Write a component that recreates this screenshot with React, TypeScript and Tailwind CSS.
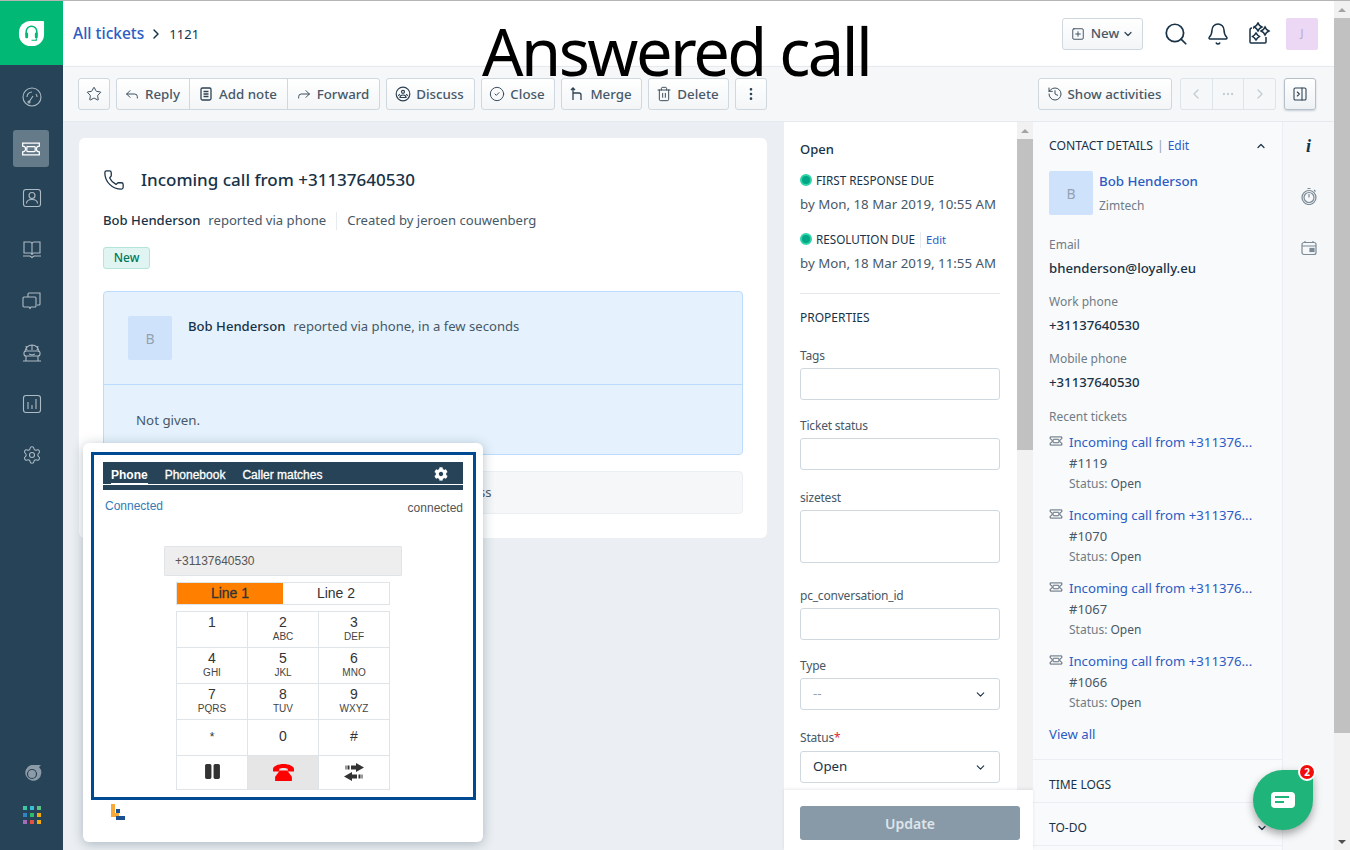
import {
  Bell,
  ChevronDown,
  ChevronLeft,
  ChevronRight,
  ChevronUp,
  CircleCheck,
  Ellipsis,
  EllipsisVertical,
  Forward,
  History,
  PanelRightClose,
  Phone,
  Reply,
  Search,
  Settings,
  SquarePlus,
  Star,
  Trash2,
} from "lucide-react";
import { FaCog, FaPause } from "react-icons/fa";
import type { ReactNode } from "react";

const FONT = "font-['Noto_Sans','Open_Sans',sans-serif]";

const RECENT = ["#1119", "#1070", "#1067", "#1066"];

const KEYS = [
  ["1", ""],
  ["2", "ABC"],
  ["3", "DEF"],
  ["4", "GHI"],
  ["5", "JKL"],
  ["6", "MNO"],
  ["7", "PQRS"],
  ["8", "TUV"],
  ["9", "WXYZ"],
];

const DOTS = ["#3fc7a3", "#3bbcd9", "#5cc185", "#2f84c6", "#2dbb6c", "#f1ab0c", "#a46bb8", "#e5503f", "#f1ab0c"];

function TicketIcon({ className }: { className?: string }) {
  return (
    <svg viewBox="0 0 24 24" fill="none" stroke="currentColor" strokeWidth="1.5" className={className}>
      <path d="M2 5h20v3.5a3.5 3.5 0 0 0 0 7V19H2v-3.5a3.5 3.5 0 0 0 0-7z" />
      <rect x="7" y="9" width="10" height="6" rx="1" />
    </svg>
  );
}

function NavIcon({ children, className = "" }: { children: ReactNode; className?: string }) {
  return (
    <svg viewBox="0 0 20 20" fill="none" stroke="#aebac4" strokeWidth="1.1" className={`h-[20px] w-[20px] ${className}`}>
      {children}
    </svg>
  );
}

function FooterDots() {
  return (
    <div className="grid grid-cols-3 gap-[3px]">
      {DOTS.map((c, i) => (
        <div key={i} className="h-[4px] w-[4px]" style={{ backgroundColor: c }} />
      ))}
    </div>
  );
}

function Sidebar() {
  return (
    <div className="flex w-[63px] shrink-0 flex-col items-center bg-[#274357]">
      <div className="flex h-[64px] w-full items-center justify-center bg-[#02b875]">
        <svg viewBox="0 0 28 28" className="h-[27px] w-[27px]">
          <path d="M13 1h13a1 1 0 0 1 1 1v13a12 12 0 0 1-12 12H13A12 12 0 0 1 1 15v-2A12 12 0 0 1 13 1z" fill="#fff" />
          <path d="M8.500 15v-3a5.500 5.500 0 0 1 11 0v3" fill="none" stroke="#02b875" strokeWidth="1.600" />
          <rect x="7.500" y="13" width="3" height="6" rx="1.400" fill="#02b875" />
          <rect x="17.500" y="13" width="3" height="6" rx="1.400" fill="#02b875" />
          <path d="M19 19v2h-5" fill="none" stroke="#02b875" strokeWidth="1.200" />
        </svg>
      </div>
      <div className="mt-[22px] flex flex-col items-center">
        <NavIcon>
          <circle cx="10" cy="10" r="9" />
          <path d="M5 10a5 5 0 0 1 5-5M15 10a5 5 0 0 0-1-3M11 9l-4 6" />
          <circle cx="7" cy="15" r="1" />
        </NavIcon>
        <div className="mt-[23px] mr-[1px] flex h-[37px] w-[36px] items-center justify-center rounded-[3px] bg-[#657b8a]">
          <TicketIcon className="h-[20px] w-[20px] text-white" />
        </div>
        <NavIcon className="mt-[21px]">
          <rect x="1.500" y="1.500" width="17" height="17" rx="2.500" />
          <circle cx="10" cy="7.500" r="3" />
          <path d="M4.500 15.500c0-3 2.500-4 5.500-4s5.500 1 5.500 4" />
        </NavIcon>
        <NavIcon className="mt-[32px]">
          <path d="M2 2h6c1 0 2 .5 2 2v11c0-1-1-2-2-2H2zM18 2h-6c-1 0-2 .5-2 2v11c0-1 1-2 2-2h6zM1 16h7l2 1.500 2-1.500h7" />
        </NavIcon>
        <NavIcon className="mt-[31px]">
          <path d="M6 6V3a1 1 0 0 1 1-1h11v11a1 1 0 0 1-1 1h-2" />
          <path d="M2 6h11a1 1 0 0 1 1 1v8a1 1 0 0 1-1 1H9l-1 1.500L7 16H2a1 1 0 0 1-1-1V7a1 1 0 0 1 1-1z" />
        </NavIcon>
        <NavIcon className="mt-[32px]">
          <path d="M3 9a7 7 0 0 1 14 0M10 2v5M4 3l1 4M16 3l-1 4" />
          <rect x="2" y="8" width="16" height="5" rx="2" />
          <path d="M4 13v5M16 13v5M1 18h18M7 11l3 1 3-1" />
        </NavIcon>
        <NavIcon className="mt-[31px]">
          <rect x="1.500" y="1.500" width="17" height="17" rx="2.500" />
          <path d="M6 8v7M10 11v4M14 5v10" />
        </NavIcon>
        <Settings className="mt-[31px] h-[20px] w-[20px] text-[#aebac4]" strokeWidth={1.3} />
      </div>
      <div className="mt-auto mb-[26px] flex flex-col items-center gap-[23px]">
        <svg viewBox="0 0 20 20" className="h-[20px] w-[20px]">
          <path d="M9 2h10l-2 2a8 8 0 1 1-8-2z" fill="#8c9ba7" />
          <circle cx="10" cy="11" r="4.500" fill="none" stroke="#274357" strokeWidth="1.200" />
        </svg>
        <FooterDots />
      </div>
    </div>
  );
}

function Btn({ icon, label, className = "" }: { icon: ReactNode; label: string; className?: string }) {
  return (
    <div className={`flex h-[32px] items-center justify-center gap-[5px] border border-[#cfd7df] bg-gradient-to-b from-white to-[#f3f5f7] pr-[2px] text-[13.3px] font-medium text-[#475867] ${className}`}>
      {icon}
      <span className="pt-[1px]">{label}</span>
    </div>
  );
}

function Toolbar() {
  const ic = "h-[16px] w-[16px] text-[#2e4253]";
  return (
    <div className="flex h-[56px] shrink-0 items-center border-y border-[#e6eaee] bg-[#f5f7f9] pr-[18px] pl-[15px] shadow-[0_1px_2px_rgba(24,50,71,0.12)]">
      <div className="flex h-[32px] w-[32px] items-center justify-center rounded-[3px] border border-[#cfd7df] bg-gradient-to-b from-white to-[#f3f5f7]">
        <Star className={ic} strokeWidth={1.4} />
      </div>
      <div className="ml-[6px] flex">
        <Btn icon={<Reply className={ic} strokeWidth={1.4} />} label="Reply" className="w-[74px] rounded-l-[3px]" />
        <Btn
          icon={
            <svg viewBox="0 0 16 16" fill="none" stroke="#2e4253" strokeWidth="1.300" className="h-[16px] w-[16px]">
              <rect x="3" y="2" width="10" height="12" rx="1.500" />
              <path d="M5.500 5.500h5M5.500 8h5M5.500 10.500h5" />
            </svg>
          }
          label="Add note"
          className="-ml-px w-[99px]"
        />
        <Btn icon={<Forward className={ic} strokeWidth={1.4} />} label="Forward" className="-ml-px w-[93px] rounded-r-[3px]" />
      </div>
      <Btn
        icon={
          <svg viewBox="0 0 16 16" fill="none" stroke="#2e4253" strokeWidth="1.200" className="h-[16px] w-[16px]">
            <circle cx="8" cy="8" r="6.800" />
            <circle cx="8" cy="5.800" r="1.500" />
            <path d="M5 11.500c0-1.500 1-2.500 3-2.500s3 1 3 2.500zM3.500 10c0-1 .5-1.500 1.500-1.800M12.500 10c0-1-.5-1.500-1.500-1.800" />
          </svg>
        }
        label="Discuss"
        className="ml-[6px] w-[89px] rounded-[3px]"
      />
      <Btn icon={<CircleCheck className={ic} strokeWidth={1.4} />} label="Close" className="ml-[6px] w-[74px] rounded-[3px]" />
      <Btn
        icon={
          <svg viewBox="0 0 16 16" fill="none" stroke="#2e4253" strokeWidth="1.300" className="h-[16px] w-[16px]">
            <path d="M4 14V2M2 4l2-2 2 2M4 7h6a2 2 0 0 1 2 2v5" />
          </svg>
        }
        label="Merge"
        className="ml-[6px] w-[81px] rounded-[3px]"
      />
      <Btn icon={<Trash2 className={ic} strokeWidth={1.4} />} label="Delete" className="ml-[6px] w-[81px] rounded-[3px]" />
      <div className="ml-[6px] flex h-[32px] w-[32px] items-center justify-center rounded-[3px] border border-[#cfd7df] bg-gradient-to-b from-white to-[#f3f5f7]">
        <EllipsisVertical className={ic} strokeWidth={2} />
      </div>
      <Btn icon={<History className={ic} strokeWidth={1.4} />} label="Show activities" className="ml-auto w-[134px] rounded-[3px]" />
      <div className="ml-[8px] flex h-[32px] w-[96px] rounded-[3px] border border-[#dfe4e9] text-[#c4ccd4]">
        <div className="flex flex-1 items-center justify-center border-r border-[#dfe4e9]">
          <ChevronLeft className="h-[16px] w-[16px]" />
        </div>
        <div className="flex flex-1 items-center justify-center border-r border-[#dfe4e9]">
          <Ellipsis className="h-[14px] w-[14px]" />
        </div>
        <div className="flex flex-1 items-center justify-center">
          <ChevronRight className="h-[16px] w-[16px]" />
        </div>
      </div>
      <div className="ml-[8px] flex h-[32px] w-[32px] items-center justify-center rounded-[3px] border border-[#b5c0ca] bg-gradient-to-b from-white to-[#eef1f4] shadow-[0_1px_2px_rgba(24,50,71,0.2)]">
        <PanelRightClose className={ic} strokeWidth={1.6} />
      </div>
    </div>
  );
}

function Header() {
  return (
    <div className="flex h-[65px] shrink-0 items-center bg-white pr-[16px] pl-[10px]">
      <span className="text-[15.5px] font-medium text-[#2c5cc5]">All tickets</span>
      <ChevronRight className="mx-[4px] h-[16px] w-[16px] text-[#12344d]" strokeWidth={2.2} />
      <span className="mt-[3px] ml-[1px] text-[13px] text-[#12344d]">1121</span>
      <div className="ml-auto flex h-[32px] w-[81px] items-center justify-center gap-[6px] rounded-[3px] border border-[#cfd7df] bg-gradient-to-b from-white to-[#f3f5f7] text-[13.3px] font-medium text-[#475867]">
        <SquarePlus className="h-[14px] w-[14px] text-[#2e4253]" strokeWidth={1.5} />
        <span>New</span>
        <ChevronDown className="-ml-[3px] h-[12px] w-[12px] text-[#2e4253]" strokeWidth={2.4} />
      </div>
      <Search className="ml-[20px] h-[26px] w-[26px] text-[#183247]" strokeWidth={1.6} />
      <Bell className="ml-[17px] h-[24px] w-[24px] text-[#183247]" strokeWidth={1.5} />
      <svg viewBox="0 0 24 24" fill="none" stroke="#183247" strokeWidth="1.500" className="ml-[17px] h-[24px] w-[24px]">
        <path d="M6 6h1M3 8v12a1 1 0 0 0 1 1h14a1 1 0 0 0 1-1v-5M3 8a2 2 0 0 1 2-2" />
        <path d="M11 1l1.500 2.500L15 5l-2.500 1.500L11 9 9.500 6.500 7 5l2.500-1.500zM18 5l1.500 2.500L22 9l-2.500 1.500L18 13l-1.500-2.500L14 9l2.500-1.500zM9 11l1.500 2 2 1.500-2 1.500L9 18l-1.500-2-2-1.500 2-1.500z" />
      </svg>
      <div className="ml-[15px] flex h-[32px] w-[32px] items-center justify-center rounded-[2px] bg-[#ecd7f5] text-[11px] text-[#b9a8c2]">J</div>
    </div>
  );
}

function TicketCard() {
  return (
    <div className="flex-1 bg-[#ebeff3] pt-[16px] pr-[16px] pl-[16px]">
      <div className="h-[400px] rounded-[6px] bg-white px-[24px] pt-[28px]">
        <div className="flex h-[28px] items-center">
          <Phone className="h-[22px] w-[22px] text-[#183247]" strokeWidth={1.4} />
          <span className="ml-[16px] text-[17px] font-medium text-[#183247]">Incoming call from +31137640530</span>
        </div>
        <div className="mt-[17px] flex h-[20px] items-center text-[13.1px] text-[#475867]">
          <span className="font-medium text-[#183247]">Bob Henderson</span>
          <span className="ml-[8px]">reported via phone</span>
          <span className="mx-[10px] h-[18px] w-px bg-[#e6eaee]" />
          <span>Created by jeroen couwenberg</span>
        </div>
        <div className="mt-[16px] flex h-[22px] w-[47px] items-center justify-center rounded-[3px] border border-[#b4e5da] bg-[#e0f5f1] text-[12px] font-medium text-[#00795b]">New</div>
        <div className="mt-[22px] h-[164px] rounded-[4px] border border-[#bbdcfe] bg-[#e5f2fd]">
          <div className="flex h-[93px] items-start border-b border-[#bbdcfe] pt-[24px] pl-[24px]">
            <div className="flex h-[44px] w-[44px] items-center justify-center rounded-[2px] bg-[#cfe2fb] text-[14px] text-[#92a2b1]">B</div>
            <div className="mt-[1px] ml-[16px] text-[13.1px] text-[#475867]">
              <span className="font-medium text-[#183247]">Bob Henderson</span>
              <span className="ml-[8px]">reported via phone, in a few seconds</span>
            </div>
          </div>
          <div className="pt-[26px] pl-[32px] text-[13.3px] text-[#475867]">Not given.</div>
        </div>
        <div className="mt-[16px] flex h-[43px] items-center rounded-[4px] border border-[#ebeff3] bg-[#f5f7f9] pl-[375px] text-[13px] text-[#475867]">ss</div>
      </div>
    </div>
  );
}

function Field({ label, children, className }: { label: ReactNode; children: ReactNode; className: string }) {
  return (
    <div className={className}>
      <div className="h-[18px] text-[12px] leading-[18px] tracking-[-0.2px] text-[#475867]">{label}</div>
      {children}
    </div>
  );
}

function Input({ h = "h-[32px]", children }: { h?: string; children?: ReactNode }) {
  return (
    <div className={`mt-[3px] flex w-[200px] items-center justify-between rounded-[3px] border border-[#cfd7df] bg-white px-[12px] text-[13.3px] ${h}`}>
      {children}
    </div>
  );
}

function DueRow({ label, edit, date }: { label: string; edit?: boolean; date: string }) {
  return (
    <div>
      <div className="flex h-[18px] items-center text-[11.7px] text-[#183247]">
        <span className="-mt-[3px] mr-[4px] h-[12px] w-[12px] rounded-full border-2 border-[#2ed3a8] bg-[#00a886]" />
        <span>{label}</span>
        {edit && <span className="ml-[5px] border-l border-[#e6eaee] pl-[5px] text-[11.3px] text-[#2c5cc5]">Edit</span>}
      </div>
      <div className="mt-[5px] h-[18px] text-[13.3px] leading-[18px] text-[#475867]">{date}</div>
    </div>
  );
}

function ScrollArrow({ down }: { down?: boolean }) {
  return (
    <div className="flex h-[17px] w-full items-center justify-center">
      <div className={`h-0 w-0 border-x-[4px] border-x-transparent ${down ? "border-t-[4px] border-t-[#505050]" : "border-b-[4px] border-b-[#a3a3a3]"}`} />
    </div>
  );
}

function PropsPanel() {
  return (
    <div className="relative w-[250px] shrink-0 border-l border-[#ebeff3] bg-white">
      <div className="flex h-full">
        <div className="w-[233px] pl-[16px]">
          <div className="mt-[17px] h-[20px] text-[13px] leading-[20px] font-medium text-[#183247]">Open</div>
          <div className="mt-[13px]">
            <DueRow label="FIRST RESPONSE DUE" date="by Mon, 18 Mar 2019, 10:55 AM" />
          </div>
          <div className="mt-[18px]">
            <DueRow label="RESOLUTION DUE" edit date="by Mon, 18 Mar 2019, 11:55 AM" />
          </div>
          <div className="mt-[21px] h-px w-[200px] bg-[#e6eaee]" />
          <div className="mt-[15px] h-[18px] text-[12px] leading-[18px] text-[#183247]">PROPERTIES</div>
          <Field label="Tags" className="mt-[20px]"><Input /></Field>
          <Field label="Ticket status" className="mt-[17px]"><Input /></Field>
          <Field label="sizetest" className="mt-[19px]"><Input h="h-[53px]" /></Field>
          <Field label="pc_conversation_id" className="mt-[24px]"><Input /></Field>
          <Field label="Type" className="mt-[17px]">
            <Input>
              <span className="text-[#92a2b1]">--</span>
              <ChevronDown className="h-[13px] w-[13px] text-[#183247]" />
            </Input>
          </Field>
          <Field label={<>Status<span className="text-[#d72d30]">*</span></>} className="mt-[19px] pb-px">
            <div className="pt-px" />
            <Input>
              <span className="text-[#183247]">Open</span>
              <ChevronDown className="h-[13px] w-[13px] text-[#183247]" />
            </Input>
          </Field>
        </div>
        <div className="w-[16px] bg-[#f1f1f1]">
          <ScrollArrow />
          <div className="h-[311px] w-full bg-[#c1c1c1]" />
        </div>
      </div>
      <div className="absolute inset-x-0 bottom-0 flex h-[60px] items-start bg-white pt-[16px] pl-[16px] shadow-[0_-1px_3px_rgba(24,50,71,0.1)]">
        <div className="flex h-[34px] w-[220px] items-center justify-center rounded-[3px] bg-[#889aa8] text-[14px] font-semibold text-[#dfe5ea]">Update</div>
      </div>
    </div>
  );
}

function ContactPanel() {
  const label = "h-[18px] text-[12px] leading-[18px] text-[#6f7c87]";
  const value = "mt-[4px] h-[20px] text-[13.2px] leading-[20px] font-medium text-[#183247]";
  return (
    <div className="w-[250px] shrink-0 overflow-hidden border-r border-[#ebeff3] bg-[#f9fafb]">
      <div className="pl-[16px]">
        <div className="mt-[15px] flex h-[18px] w-[218px] items-center text-[12.2px] text-[#183247]">
          <span>CONTACT DETAILS</span>
          <span className="mx-[4px] text-[#92a2b1]">|</span>
          <span className="text-[12px] text-[#2c5cc5]">Edit</span>
          <ChevronUp className="ml-auto h-[12px] w-[12px]" strokeWidth={2.4} />
        </div>
        <div className="mt-[16px] flex">
          <div className="flex h-[44px] w-[44px] items-center justify-center rounded-[2px] bg-[#cfe2fb] text-[14px] text-[#92a2b1]">B</div>
          <div className="ml-[6px]">
            <div className="h-[20px] text-[13.3px] leading-[20px] font-medium text-[#2c5cc5]">Bob Henderson</div>
            <div className="mt-[6px] h-[18px] text-[12px] leading-[18px] text-[#6f7c87]">Zimtech</div>
          </div>
        </div>
        <div className={`mt-[21px] ${label}`}>Email</div>
        <div className={value}>bhenderson@loyally.eu</div>
        <div className={`mt-[15px] ${label}`}>Work phone</div>
        <div className={value}>+31137640530</div>
        <div className={`mt-[15px] ${label}`}>Mobile phone</div>
        <div className={value}>+31137640530</div>
        <div className={`mt-[16px] ${label}`}>Recent tickets</div>
        {RECENT.map((id, i) => (
          <div key={id} className={`flex ${i === 0 ? "mt-[6px]" : "mt-[11px]"}`}>
            <TicketIcon className="mt-[2px] h-[14px] w-[14px] text-[#475867]" />
            <div className="ml-[6px]">
              <div className="h-[20px] text-[13.2px] leading-[20px] text-[#2c5cc5]">Incoming call from +311376...</div>
              <div className="mt-[1px] h-[20px] text-[13px] leading-[20px] text-[#475867]">{id}</div>
              <div className="mt-[1px] h-[20px] text-[12px] leading-[20px] text-[#6f7c87]">
                Status: <span className="text-[#475867]">Open</span>
              </div>
            </div>
          </div>
        ))}
        <div className="mt-[11px] h-[20px] text-[13.2px] leading-[20px] text-[#2c5cc5]">View all</div>
      </div>
      <div className="mt-[15px] flex h-[44px] items-center justify-between border-y border-[#ebeff3] pt-[8px] pr-[14px] pl-[16px] text-[12px] text-[#183247]">
        <span>TIME LOGS</span>
        <ChevronDown className="h-[12px] w-[12px]" strokeWidth={2.4} />
      </div>
      <div className="flex h-[43px] items-center justify-between border-b border-[#ebeff3] pt-[8px] pr-[14px] pl-[16px] text-[12px] text-[#183247]">
        <span>TO-DO</span>
        <ChevronDown className="h-[12px] w-[12px]" strokeWidth={2.4} />
      </div>
    </div>
  );
}

function IconRail() {
  return (
    <div className="flex w-[51px] shrink-0 flex-col items-center bg-[#f5f7f9] pt-[15px]">
      <span className="font-['Liberation_Serif',serif] text-[18px] leading-[18px] font-bold text-[#12344d] italic">i</span>
      <svg viewBox="0 0 16 18" fill="none" stroke="#7b8a96" strokeWidth="1.200" className="mt-[32px] h-[18px] w-[16px]">
        <circle cx="8" cy="10.500" r="7" />
        <circle cx="8" cy="10.500" r="5" />
        <path d="M8 10.500V7M6.500 1.500h3M13 3l1.500 1.500" />
      </svg>
      <svg viewBox="0 0 16 16" fill="none" stroke="#7b8a96" strokeWidth="1.200" className="mt-[35px] h-[16px] w-[16px]">
        <rect x="1" y="2.500" width="14" height="12" rx="2" />
        <path d="M1 6h14M4 1v2M12 1v2" />
        <rect x="9" y="8.500" width="4" height="3" fill="#7b8a96" />
      </svg>
    </div>
  );
}

function HangupIcon() {
  return (
    <svg viewBox="0 0 20 16" className="h-[17px] w-[21px]" fill="#ff0000">
      <path d="M0 5C0 2 5 0 10 0s10 2 10 5v2h-6V4.500C13 4 11.500 3.800 10 3.800S7 4 6 4.500V7H0z" />
      <path d="M6.500 6h7L18 12v4H2v-4z" />
    </svg>
  );
}

function TransferIcon() {
  return (
    <svg viewBox="0 0 20 18" className="h-[18px] w-[20px]" fill="#333">
      <path d="M12 0l8 4.500-8 4.500V6.500H7v-4h5zM5.500 2.500h-2v4h2zM2.500 2.500h-1v4h1z" />
      <path d="M8 9v2.500h5v4H8V18L0 13.500zM14.500 11.500h2v4h-2zM17.500 11.500h1v4h-1z" />
    </svg>
  );
}

function KeyCell({ children, className = "" }: { children: ReactNode; className?: string }) {
  return (
    <div className={`-mt-px -ml-px flex flex-col items-center border border-[#dfe4e9] ${className}`}>{children}</div>
  );
}

function PhoneWidget() {
  return (
    <div className="absolute top-[443px] left-[83px] h-[399px] w-[400px] rounded-[6px] bg-white pt-[9px] pl-[8px] font-['Liberation_Sans',Arial,sans-serif] shadow-[0_2px_12px_rgba(24,50,71,0.3)]">
      <div className="h-[348px] w-[385px] border-[3px] border-[#004a94] pt-[7px] pl-[9px]">
        <div className="h-[28px] w-[360px] bg-[#274357] pt-[5px]">
          <div className="flex h-[18px] items-start border-b border-white pr-[15px] pl-[8px] text-[12px] leading-[16px] font-bold text-white">
            <span className="h-[18px] border-b-[2px] border-white">Phone</span>
            <span className="ml-[17px] font-normal [-webkit-text-stroke:0.3px_white]">Phonebook</span>
            <span className="ml-[17px] font-normal [-webkit-text-stroke:0.3px_white]">Caller matches</span>
            <FaCog className="ml-auto h-[14px] w-[14px]" />
          </div>
        </div>
        <div className="flex h-[56px] w-[360px] items-start justify-between pt-[9px] pl-[2px] text-[12px] leading-[14px]">
          <span className="text-[#337ab7]">Connected</span>
          <span className="mt-[2px] text-[#555]">connected</span>
        </div>
        <div className="ml-[61px] flex h-[30px] w-[238px] items-center rounded-[1px] border border-[#dfe4e9] bg-[#eee] pl-[10px] text-[12px] text-[#555]">+31137640530</div>
        <div className="mt-[6px] ml-[73px] flex h-[23px] w-[214px] border border-[#dfe4e9] text-[14px] text-[#333]">
          <div className="flex w-[106px] items-center justify-center bg-[#ff8000] [-webkit-text-stroke:0.3px_#333]">Line 1</div>
          <div className="flex flex-1 items-center justify-center">Line 2</div>
        </div>
        <div className="mt-[7px] ml-[74px] grid w-[213px] grid-cols-3 text-[#333]">
          {KEYS.map(([n, l]) => (
            <KeyCell key={n} className="h-[37px] pt-[2px]">
              <span className="text-[14px] leading-[16px]">{n}</span>
              <span className="text-[10px] leading-[14px] text-[#444]">{l}</span>
            </KeyCell>
          ))}
          <KeyCell className="h-[37px] justify-center pb-[2px] text-[12px]">*</KeyCell>
          <KeyCell className="h-[37px] justify-center pb-[2px] text-[14px]">0</KeyCell>
          <KeyCell className="h-[37px] justify-center pb-[2px] text-[14px]">#</KeyCell>
          <KeyCell className="h-[35px] justify-center pb-[2px]">
            <FaPause className="h-[17px] w-[17px]" />
          </KeyCell>
          <KeyCell className="h-[35px] justify-center bg-[#e6e6e6]">
            <HangupIcon />
          </KeyCell>
          <KeyCell className="h-[35px] justify-center pb-[2px]">
            <TransferIcon />
          </KeyCell>
        </div>
      </div>
      <svg viewBox="0 0 14 16" className="mt-[4px] ml-[20px] h-[16px] w-[14px]">
        <rect x="0" y="0" width="4" height="13" fill="#f7a839" />
        <rect x="0" y="9" width="8" height="4" fill="#f7a839" />
        <rect x="5" y="5" width="4" height="4" fill="#1c4f8f" />
        <rect x="5" y="12" width="9" height="4" fill="#1c4f8f" />
      </svg>
    </div>
  );
}

export default function App() {
  return (
    <div className={`relative flex h-[850px] w-[1350px] flex-col overflow-hidden bg-white ${FONT}`}>
      <div className="h-px shrink-0 bg-[#b5b5b5]" />
      <div className="flex min-h-0 flex-1">
        <Sidebar />
        <div className="flex min-w-0 flex-1 flex-col">
          <Header />
          <Toolbar />
          <div className="flex min-h-0 flex-1">
            <TicketCard />
            <PropsPanel />
            <ContactPanel />
            <IconRail />
          </div>
        </div>
        <div className="flex w-[16px] shrink-0 flex-col bg-[#f1f1f1]">
          <ScrollArrow />
          <div className="h-[715px] w-full bg-[#c1c1c1]" />
          <div className="mt-auto">
            <ScrollArrow down />
          </div>
        </div>
      </div>
      <PhoneWidget />
      <div className="absolute top-[19px] left-[482px] text-[65px] leading-[64px] font-normal tracking-[-2.5px] text-black">Answered call</div>
      <div className="absolute top-[770px] left-[1253px] flex h-[60px] w-[60px] items-center justify-center rounded-[30px] rounded-tr-[8px] bg-[#1fb57a] shadow-[0_4px_8px_rgba(0,0,0,0.35)]">
        <svg viewBox="0 0 24 18" className="h-[18px] w-[24px]">
          <rect width="24" height="16" y="1" rx="4" fill="#fff" />
          <rect x="4" y="5" width="14" height="2" fill="#1fb57a" />
          <rect x="4" y="10" width="9" height="2" fill="#1fb57a" />
        </svg>
      </div>
      <div className="absolute top-[763px] left-[1298px] flex h-[18px] w-[18px] items-center justify-center rounded-full border-2 border-white bg-[#f20d0d] text-[10px] font-bold text-white">2</div>
    </div>
  );
}
